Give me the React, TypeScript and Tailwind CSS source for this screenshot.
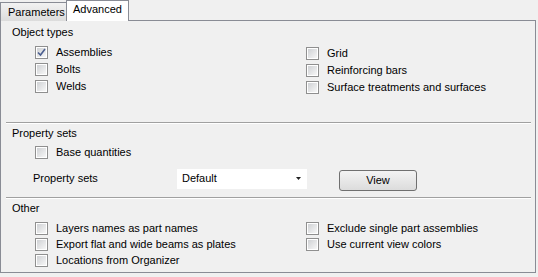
import React from 'react';

function Check({ label, checked = false, h = 'h-[17px]' }: { label: string; checked?: boolean; h?: string }) {
  return (
    <div className={`flex items-center ${h}`}>
      <div className="w-[13px] h-[13px] border border-[#8f8f8f] bg-white p-px shrink-0">
        <div className="w-full h-full bg-gradient-to-br from-[#cfd1d4] to-[#f7f7f7] flex items-center justify-center">
          {checked && (
            <svg width="9" height="9" viewBox="0 0 9 9">
              <path d="M1 4.5 L3.5 7 L8 1" fill="none" stroke="#4b5e8f" strokeWidth="1.6" />
            </svg>
          )}
        </div>
      </div>
      <span className="ml-[8px] whitespace-nowrap">{label}</span>
    </div>
  );
}

function Separator() {
  return <div className="mx-[5px] w-[525px] border-t border-[#a0a0a0] border-b border-b-white" />;
}

export default function App() {
  return (
    <div
      className="w-[538px] h-[277px] bg-[#f0f0f0] text-[11px] leading-[13px] text-black"
      style={{ fontFamily: '"Liberation Sans", Arial, sans-serif' }}
    >
      {/* tab strip */}
      <div className="flex items-end h-[21px]">
        <div className="h-[19px] w-[67px] border border-b-0 border-[#898c95] bg-gradient-to-b from-[#f2f2f2] to-[#dcdcdc] flex items-center pl-[7px] pt-px">
          Parameters
        </div>
        <div className="h-[21px] w-[63px] -ml-px border border-b-0 border-[#898c95] bg-white flex items-center pl-[6px] pb-[3px] relative z-10">
          Advanced
        </div>
      </div>

      {/* panel */}
      <div className="-mt-px w-[536px] h-[253px] border border-[#898c95] bg-[#f0f0f0] flex flex-col">
        {/* Object types */}
        <div className="h-[101px] pt-[5px]">
          <div className="pl-[11px]">Object types</div>
          <div className="mt-[5px] grid grid-cols-[271px_1fr] pl-[34px]">
            <div className="flex flex-col">
              <Check label="Assemblies" checked />
              <Check label="Bolts" />
              <Check label="Welds" />
            </div>
            <div className="flex flex-col mt-px">
              <Check label="Grid" />
              <Check label="Reinforcing bars" />
              <Check label="Surface treatments and surfaces" />
            </div>
          </div>
        </div>
        <Separator />

        {/* Property sets */}
        <div className="h-[73px] pt-[3px]">
          <div className="pl-[11px]">Property sets</div>
          <div className="mt-[4px] pl-[34px]">
            <Check label="Base quantities" />
          </div>
          <div className="mt-[5px] flex items-center pl-[32px]">
            <span className="w-[144px]">Property sets</span>
            <div className="w-[130px] h-[20px] bg-white flex items-center justify-between pl-[5px] pr-[6px]">
              <span>Default</span>
              <svg width="5" height="3" viewBox="0 0 5 3">
                <path d="M0 0 H5 L2.5 3 Z" fill="#222" />
              </svg>
            </div>
            <button className="ml-[32px] mt-[4px] w-[78px] h-[21px] rounded-[3px] border border-[#707070] bg-gradient-to-b from-[#f3f3f3] to-[#dcdcdc] flex items-center justify-center">
              View
            </button>
          </div>
        </div>
        <Separator />

        {/* Other */}
        <div className="pt-[3px]">
          <div className="pl-[11px]">Other</div>
          <div className="mt-[5px] grid grid-cols-[271px_1fr] pl-[34px]">
            <div className="flex flex-col">
              <Check h="h-[16px]" label="Layers names as part names" />
              <Check h="h-[16px]" label="Export flat and wide beams as plates" />
              <Check h="h-[16px]" label="Locations from Organizer" />
            </div>
            <div className="flex flex-col">
              <Check h="h-[16px]" label="Exclude single part assemblies" />
              <Check h="h-[16px]" label="Use current view colors" />
            </div>
          </div>
        </div>
      </div>
    </div>
  );
}
